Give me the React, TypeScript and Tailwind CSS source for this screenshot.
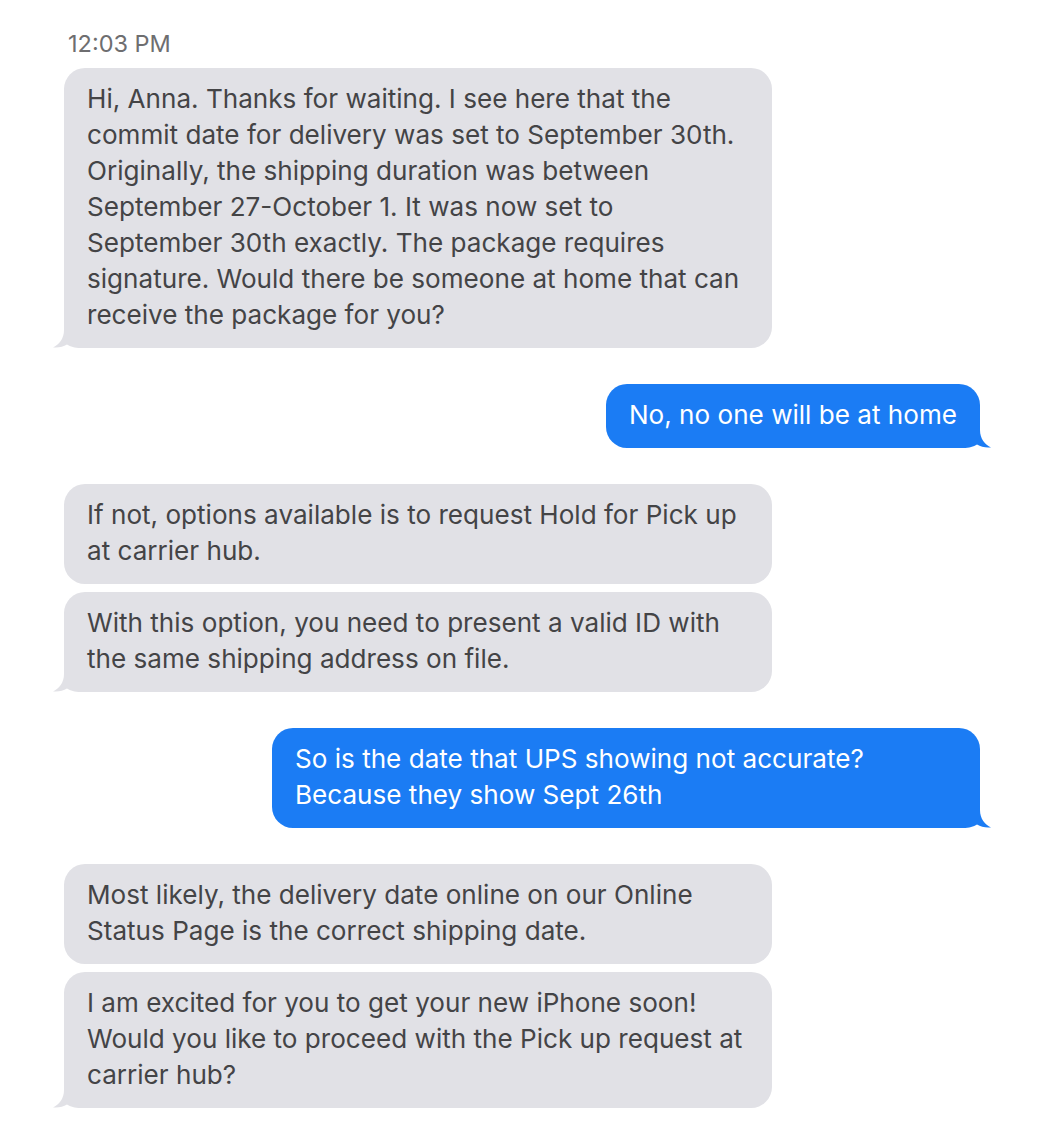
import type { ReactNode } from 'react';

type Side = 'in' | 'out';

type Msg = { side: Side; text: ReactNode; tail: boolean };

const groups: Msg[][] = [
  [
    {
      side: 'in',
      tail: true,
      text:
        'Hi, Anna. Thanks for waiting. I see here that the commit date for delivery was set to September 30th. Originally, the shipping duration was between September 27-October 1. It was now set to September 30th exactly. The package requires signature. Would there be someone at home that can receive the package for you?',
    },
  ],
  [{ side: 'out', tail: true, text: 'No, no one will be at home' }],
  [
    { side: 'in', tail: false, text: 'If not, options available is to request Hold for Pick up at carrier hub.' },
    {
      side: 'in',
      tail: true,
      text: 'With this option, you need to present a valid ID with the same shipping address on file.',
    },
  ],
  [
    {
      side: 'out',
      tail: true,
      text: 'So is the date that UPS showing not accurate? Because they show Sept 26th',
    },
  ],
  [
    {
      side: 'in',
      tail: false,
      text: 'Most likely, the delivery date online on our Online Status Page is the correct shipping date.',
    },
    {
      side: 'in',
      tail: true,
      text: 'I am excited for you to get your new iPhone soon! Would you like to proceed with the Pick up request at carrier hub?',
    },
  ],
];

// iMessage style tail, drawn for the left side and mirrored for the right
function Tail({ side }: { side: Side }) {
  const fill = side === 'in' ? '#e1e1e6' : '#1b7cf4';
  return (
    <svg
      width="34"
      height="30"
      viewBox="0 0 34 30"
      className={
        side === 'in'
          ? 'absolute bottom-0 left-[-11px]'
          : 'absolute bottom-0 right-[-11px] -scale-x-100'
      }
    >
      <path
        d="M11 0 L11 12 C11 21 6 26.5 0 29.4 C5 30 10 29 14 26.5 C17.5 28.8 21.5 30 28 30 L34 30 L34 0 Z"
        fill={fill}
      />
    </svg>
  );
}

function Bubble({ msg }: { msg: Msg }) {
  const isIn = msg.side === 'in';
  return (
    <div className={isIn ? 'flex justify-start' : 'flex justify-end'}>
      <div
        className={
          'relative w-fit max-w-[708px] rounded-[21px] px-[23px] pt-[13px] pb-[15px] text-[26.1px] leading-[36px] ' +
          (isIn ? 'bg-[#e1e1e6] text-[#444446]' : 'bg-[#1b7cf4] text-white')
        }
      >
        {msg.tail && <Tail side={msg.side} />}
        <p className="relative">{msg.text}</p>
      </div>
    </div>
  );
}

export default function App() {
  return (
    <div
      className="min-h-screen bg-white pl-[64px] pr-[60px] pt-[28px]"
      style={{ fontFamily: 'Inter, "Open Sans", sans-serif' }}
    >
      <div className="pl-[4px] text-[23.5px] leading-[32px] text-[#6e6e70]">12:03 PM</div>
      <div className="mt-[8px] flex flex-col gap-[36px]">
        {groups.map((group, i) => (
          <div key={i} className="flex flex-col gap-[8px]">
            {group.map((m, j) => (
              <Bubble key={j} msg={m} />
            ))}
          </div>
        ))}
      </div>
    </div>
  );
}
